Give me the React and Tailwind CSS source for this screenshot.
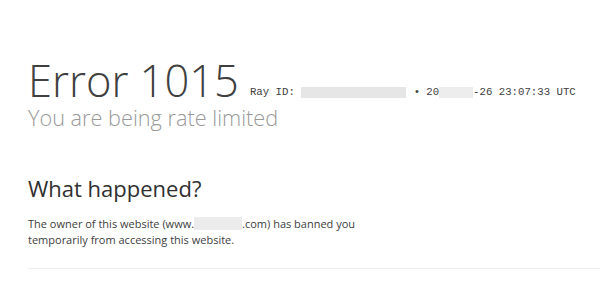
export default function App() {
  return (
    <div className="min-h-[291px] w-full bg-white font-['Open_Sans',sans-serif] text-[#404040]">
      <div className="pl-[28px] pt-[56px]">
        <div className="flex items-baseline">
          <h1 className="text-[43.5px] font-light leading-[49px] text-[#404040]">Error 1015</h1>
          <span className="ml-[11px] flex -translate-y-[2px] items-center font-['Liberation_Mono',monospace] text-[10.7px] text-[#404040]">
            Ray ID:
            <span className="ml-[6px] inline-block h-[11px] w-[105px] bg-[#e6e6e6]" />
            <span className="ml-[8px]">•</span>
            <span className="ml-[6px]">20</span>
            <span className="inline-block h-[11px] w-[34px] bg-[#ededed]" />
            <span>-26 23:07:33 UTC</span>
          </span>
        </div>
        <h2 className="text-[21.7px] font-light leading-[26px] text-[#999]">You are being rate limited</h2>
        <h3 className="mt-[43px] text-[22px] font-normal leading-[28px] text-[#303030]">What happened?</h3>
        <p className="mt-[13px] w-[340px] text-[11px] leading-[16px] text-[#404040]">
          The owner of this website (www.
          <span className="inline-block h-[13px] w-[48px] translate-y-[2px] bg-[#ececec]" />
          .com) has banned you temporarily from accessing this website.
        </p>
        <div className="mt-[20px] h-px bg-[#ededed]" />
      </div>
    </div>
  );
}
